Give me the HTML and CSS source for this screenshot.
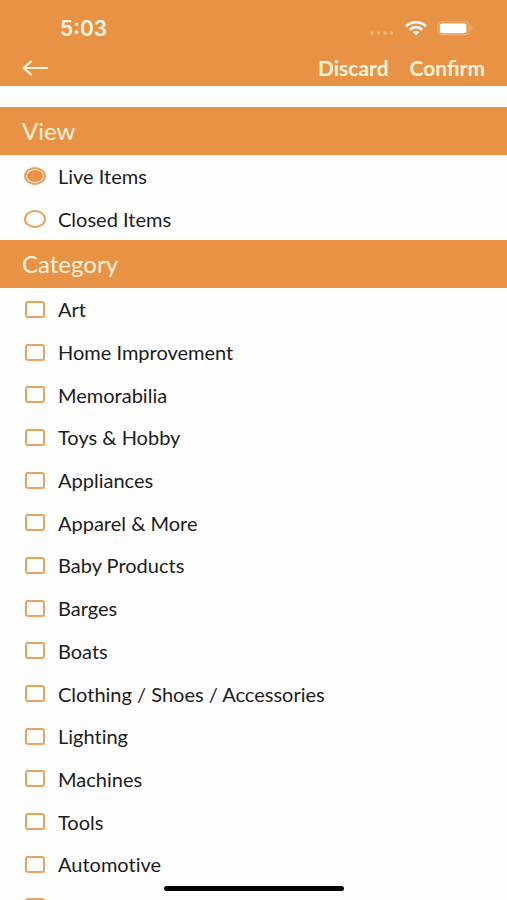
FILE: index.html
```html
<!DOCTYPE html>
<html lang="en">
<head>
<meta charset="utf-8">
<meta name="viewport" content="width=device-width, initial-scale=1">
<title>Filter items</title>
<link rel="stylesheet" href="styles.css">
</head>
<body>
<form class="app">
  <header class="header">
    <div class="status">
      <span class="time">5:03</span>
      <span class="status-icons">
        <svg width="26" height="20" viewBox="0 0 26 20" aria-hidden="true"><g fill="#f4c591" opacity=".7"><circle cx="3" cy="15" r="1.7"/><circle cx="9.5" cy="15" r="1.7"/><circle cx="16" cy="15" r="1.7"/><circle cx="22.5" cy="15" r="1.7"/></g></svg>
        <svg width="22" height="20" viewBox="0 0 22 20" aria-hidden="true"><g fill="none" stroke="#fff" stroke-width="2.7"><path d="M1.2 8.2C6.5 2.9 15.5 2.9 20.8 8.2"/><path d="M4.8 11.7C8.3 8.3 13.7 8.3 17.2 11.7"/></g><path d="M7.6 14C9.6 12.2 12.4 12.2 14.4 14L11 17.2Z" fill="#fff"/></svg>
        <svg width="36" height="20" viewBox="0 0 36 20" aria-hidden="true"><rect x=".8" y="3.8" width="31.4" height="13" rx="4" fill="none" stroke="#f0b880"/><rect x="2.8" y="5.6" width="26.6" height="9.6" rx="2" fill="#fff"/><path d="M33.5 8.2Q35.5 8.7 35.5 10.3T33.5 12.4Z" fill="#f0b880"/></svg>
      </span>
    </div>
    <nav class="toolbar">
      <button class="back" type="button" aria-label="Back"><svg width="28" height="18" viewBox="0 0 28 18" aria-hidden="true"><path d="M25 9H1.5M9 2.7L1.5 9L9 15.3" fill="none" stroke="#fff3dc" stroke-width="2.2" stroke-linecap="round" stroke-linejoin="round"/></svg></button>
      <button class="action" type="reset">Discard</button>
      <button class="action" type="submit">Confirm</button>
    </nav>
  </header>
  <h2 class="section-title">View</h2>
  <div class="options views">
    <label class="option"><input class="radio" type="radio" name="view" checked>Live Items</label>
    <label class="option"><input class="radio" type="radio" name="view">Closed Items</label>
  </div>
  <h2 class="section-title">Category</h2>
  <div class="options categories">
    <label class="option"><input class="check" type="checkbox">Art</label>
    <label class="option"><input class="check" type="checkbox">Home Improvement</label>
    <label class="option"><input class="check" type="checkbox">Memorabilia</label>
    <label class="option"><input class="check" type="checkbox">Toys &amp; Hobby</label>
    <label class="option"><input class="check" type="checkbox">Appliances</label>
    <label class="option"><input class="check" type="checkbox">Apparel &amp; More</label>
    <label class="option"><input class="check" type="checkbox">Baby Products</label>
    <label class="option"><input class="check" type="checkbox">Barges</label>
    <label class="option"><input class="check" type="checkbox">Boats</label>
    <label class="option"><input class="check" type="checkbox">Clothing / Shoes / Accessories</label>
    <label class="option"><input class="check" type="checkbox">Lighting</label>
    <label class="option"><input class="check" type="checkbox">Machines</label>
    <label class="option"><input class="check" type="checkbox">Tools</label>
    <label class="option"><input class="check" type="checkbox">Automotive</label>
    <label class="option"><input class="check" type="checkbox" aria-label="More"></label>
  </div>
  <div class="home-bar"></div>
</form>
</body>
</html>
```
FILE: styles.css
```css
* {
  box-sizing: border-box;
}

body {
  margin: 0;
  background: #fefefe;
  color: #1c1c1c;
  font-family: Lato, "Liberation Sans", sans-serif;
  font-size: 20px;
}

.app {
  display: flex;
  flex-direction: column;
  height: 100vh;
  overflow: hidden;
}

.header {
  flex: none;
  margin-bottom: 21px;
  padding: 18px 0 6px;
  background: #e89245;
}

.status {
  display: flex;
  align-items: center;
  justify-content: space-between;
  height: 20px;
  padding: 0 34px 0 60px;
}

.time {
  color: #fff8ea;
  font-family: Inter, "Liberation Sans", sans-serif;
  font-size: 21px;
  font-weight: 600;
}

.status-icons {
  display: flex;
  gap: 10px;
}

.toolbar {
  display: flex;
  align-items: center;
  gap: 21px;
  margin-top: 18px;
  padding: 0 22px;
}

.back,
.action {
  padding: 0;
  border: 0;
  background: none;
  color: #fff3dc;
  font: inherit;
}

.back {
  display: flex;
  margin-right: auto;
}

.action {
  font-size: 21px;
  font-weight: 700;
  line-height: 24px;
}

.section-title {
  flex: none;
  margin: 0;
  padding: 0 22px;
  background: #e89245;
  color: #fff3dc;
  font-size: 24px;
  font-weight: 400;
  line-height: 48px;
}

.options {
  display: grid;
  font-variant-ligatures: none;
}

.views {
  flex: none;
  grid-auto-rows: 1fr;
  height: 85px;
}

.categories {
  flex: 1;
  min-height: 0;
  grid-auto-rows: 7%;
  padding-bottom: 2px;
  overflow: hidden;
}

.option {
  display: flex;
  align-items: center;
  padding: 0 24px;
}

.radio,
.check {
  flex: none;
  margin: 0;
  border: 2px solid #eba05c;
  appearance: none;
}

.radio {
  width: 22px;
  height: 18px;
  margin-right: 12px;
  border-radius: 50%;
}

.radio:checked {
  background: #e89245;
  box-shadow: inset 0 0 0 1px #fefefe;
}

.check {
  width: 20px;
  height: 17px;
  margin: 0 13px 0 1px;
  border-radius: 3px;
}

.check:checked {
  background: #e89245;
}

.home-bar {
  position: absolute;
  bottom: 9px;
  left: 50%;
  width: 180px;
  height: 5px;
  margin-left: -90px;
  border-radius: 3px;
  background: #000;
}
```
